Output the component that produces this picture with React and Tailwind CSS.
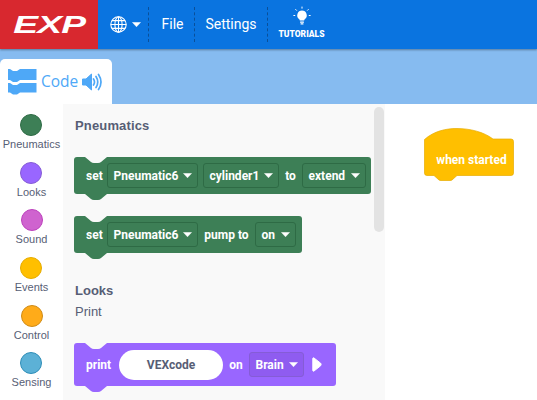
import React from 'react';

const categories = [
  { name: 'Pneumatics', bg: 'bg-[#3d7f56]', border: 'border-[#2e6b45]' },
  { name: 'Looks', bg: 'bg-[#9966ff]', border: 'border-[#855cd6]' },
  { name: 'Sound', bg: 'bg-[#cf63cf]', border: 'border-[#bd42bd]' },
  { name: 'Events', bg: 'bg-[#ffbf00]', border: 'border-[#e6ac00]' },
  { name: 'Control', bg: 'bg-[#ffab19]', border: 'border-[#cf8b17]' },
  { name: 'Sensing', bg: 'bg-[#5cb1d6]', border: 'border-[#2e8eb8]' },
];

const Caret = ({ className }) => (
  <svg width="9" height="5" viewBox="0 0 9 5" className={`shrink-0 ${className || ''}`}>
    <path d="M0.5 0.5 H8.5 L4.5 4.8 Z" fill="currentColor" stroke="currentColor" strokeWidth="0.5" strokeLinejoin="round" />
  </svg>
);

const Globe = () => (
  <svg width="17" height="17" viewBox="0 0 17 17" fill="none" stroke="white" strokeWidth="1.1">
    <circle cx="8.5" cy="8.5" r="7.7" />
    <ellipse cx="8.5" cy="8.5" rx="3.6" ry="7.7" />
    <path d="M8.5 0.8 V16.2 M0.8 8.5 H16.2 M1.9 4.6 H15.1 M1.9 12.4 H15.1" />
  </svg>
);

const Bulb = () => (
  <svg width="20" height="20" viewBox="0 0 20 20" fill="white">
    <path d="M10 4.5 a4.8 4.8 0 0 1 3 8.5 c-.6.5-.8 1-.8 1.6 H7.8 c0-.6-.2-1.1-.8-1.6 A4.8 4.8 0 0 1 10 4.5 Z" />
    <rect x="8" y="15.4" width="4" height="1.3" rx=".5" />
    <rect x="8.5" y="17.2" width="3" height="1.2" rx=".5" />
    <path d="M10 .6 V2.6 M3.4 3.2 L4.8 4.6 M16.6 3.2 L15.2 4.6 M1.4 9.5 H3.2 M16.8 9.5 H18.6" stroke="white" strokeWidth="1" />
  </svg>
);

const CodeIcon = () => (
  <svg width="29" height="26" viewBox="0 0 29 26" fill="#4ea8f7">
    <path d="M0 0 H2 L5 2 H9 L12 0 H28.5 V11 H12 L9 13 H5 L2 11 H0 Z" />
    <path d="M0 14 H2 L5 16 H9 L12 14 H28.5 V23.5 H12 L9 25.5 H5 L2 23.5 H0 Z" />
  </svg>
);

const Speaker = () => (
  <svg width="20" height="18" viewBox="0 0 20 18" fill="none">
    <path d="M0.5 6 H4 L9.5 1 V17 L4 12 H0.5 Z" fill="#4ea8f7" stroke="#4ea8f7" strokeLinejoin="round" />
    <path d="M11.5 6 Q13.5 9 11.5 12 M14 3.5 Q17.5 9 14 14.5 M16.5 1.5 Q21.5 9 16.5 16.5" stroke="#4ea8f7" strokeWidth="1.7" strokeLinecap="round" />
  </svg>
);

const Dropdown = ({ label, w, border, bg }) => (
  <div className={`flex h-[25px] items-center justify-between rounded-[3px] border pl-[5.5px] pr-[5px] ${w} ${border} ${bg}`}>
    <span>{label}</span>
    <Caret className="text-white" />
  </div>
);

// stack block: notch cut out of the top, bump under the bottom edge
const Block = ({ color, fill, h, w, children }) => (
  <div className={`relative flex items-center rounded-[3px] pl-3 text-[12px] font-bold text-white font-['Roboto',sans-serif] ${color} ${h} ${w}`}>
    <svg width="22" height="6" viewBox="0 0 22 6" className="absolute left-[11px] top-0">
      <path d="M0 0 H22 L16 5 Q15 6 13 6 H9 Q7 6 6 5 Z" fill="#f9f9f9" />
    </svg>
    <svg width="22" height="6" viewBox="0 0 22 6" className="absolute left-[11px] top-full">
      <path d="M0 0 H22 L16 5 Q15 6 13 6 H9 Q7 6 6 5 Z" fill={fill} />
    </svg>
    {children}
  </div>
);

const App = () => {
  return (
    <div className="flex h-[400px] w-[537px] flex-col overflow-hidden bg-white font-['Liberation_Sans',sans-serif]">
      {/* Menu bar */}
      <header className="relative z-10 flex h-[49px] shrink-0 items-stretch bg-[#0a74e0] text-white shadow-[0_1px_2px_rgba(0,0,0,0.35)] font-['Roboto',sans-serif]">
        <div className="flex w-[98px] items-center justify-center bg-[#d8282f]">
          <span className="inline-block origin-center scale-x-[1.55] text-[24px] font-black italic leading-none tracking-[-0.5px] font-['Liberation_Sans',sans-serif]">EXP</span>
        </div>
        <div className="flex w-[50px] items-center gap-[5px] pl-[12px]">
          <Globe />
          <Caret />
        </div>
        <div className="my-[7px] flex w-[46px] items-center justify-center border-l border-dashed border-[#0a4f99] pl-[2px] text-[14px]">File</div>
        <div className="my-[7px] flex w-[73px] items-center justify-center border-l border-dashed border-[#0a4f99] text-[14px]">Settings</div>
        <div className="my-[7px] flex w-[68px] flex-col items-center border-l border-dashed border-[#0a4f99]">
          <div className="-mt-[1px]"><Bulb /></div>
          <span className="mt-[4px] text-[8.5px] font-black leading-none">TUTORIALS</span>
        </div>
      </header>

      {/* Tab strip */}
      <div className="flex h-[55px] shrink-0 items-end bg-[#86bbf0]">
        <div className="flex h-[45px] w-[112px] items-center gap-[4px] rounded-t-[5px] bg-white pl-[8px] pt-[1px]">
          <CodeIcon />
          <span className="text-[15.5px] text-[#4ea8f7] font-['Open_Sans',sans-serif]">Code</span>
          <Speaker />
        </div>
      </div>

      <div className="flex min-h-0 flex-1">
        {/* Categories */}
        <div className="flex w-[63px] shrink-0 flex-col items-center pt-[10px]">
          {categories.map((c) => (
            <div key={c.name} className="flex h-[48px] flex-col items-center">
              <div className={`h-[22px] w-[22px] rounded-full border ${c.bg} ${c.border}`} />
              <span className="mt-[2px] text-[11px] leading-[13px] text-[#575e75]">{c.name}</span>
            </div>
          ))}
        </div>

        {/* Flyout */}
        <div className="relative w-[322px] shrink-0 overflow-hidden bg-[#f9f9f9] pl-[11px]">
          <div className="absolute right-[1px] top-[3px] h-[125px] w-[10px] rounded-full bg-[#e3e3e3]" />
          <div className="pl-[1px] pt-[14px] text-[13px] font-bold leading-[15px] tracking-[0.15px] text-[#575e75]">Pneumatics</div>
          <div className="mt-[24px]">
            <Block color="bg-[#3d7f56]" fill="#3d7f56" h="h-[37px]" w="w-[297px]">
              <span className="w-[21px]">set</span>
              <Dropdown label="Pneumatic6" w="w-[91px]" border="border-[#2e6b45]" bg="bg-[#3d7f56]" />
              <div className="w-[5px]" />
              <Dropdown label="cylinder1" w="w-[76px]" border="border-[#2e6b45]" bg="bg-[#3d7f56]" />
              <span className="w-[23px] text-center">to</span>
              <Dropdown label="extend" w="w-[64px]" border="border-[#2e6b45]" bg="bg-[#3d7f56]" />
            </Block>
          </div>
          <div className="mt-[22px]">
            <Block color="bg-[#3d7f56]" fill="#3d7f56" h="h-[37px]" w="w-[228px]">
              <span className="w-[21px]">set</span>
              <Dropdown label="Pneumatic6" w="w-[91px]" border="border-[#2e6b45]" bg="bg-[#3d7f56]" />
              <span className="w-[57px] text-center">pump to</span>
              <Dropdown label="on" w="w-[41px]" border="border-[#2e6b45]" bg="bg-[#3d7f56]" />
            </Block>
          </div>
          <div className="mt-[30px] pl-[1px] text-[13px] font-bold leading-[15px] text-[#575e75]">Looks</div>
          <div className="mt-[6px] pl-[1px] text-[13px] leading-[15px] text-[#575e75]">Print</div>
          <div className="mt-[24px]">
            <Block color="bg-[#9966ff]" fill="#9966ff" h="h-[43px]" w="w-[262px]">
              <span className="w-[33px]">print</span>
              <div className="flex h-[30px] w-[104px] items-center justify-center rounded-full bg-white text-[#575e75]">VEXcode</div>
              <span className="w-[26px] text-center">on</span>
              <Dropdown label="Brain" w="w-[55px]" border="border-[#855cd6]" bg="bg-[#8f5cf0]" />
              <svg width="10" height="15" viewBox="0 0 10 15" className="ml-[8px]">
                <path d="M0.8 1.5 Q0.8 0.5 2 1 L8.6 6.2 Q9.6 7.5 8.6 8.8 L2 14 Q0.8 14.5 0.8 13.5 Z" fill="white" stroke="white" />
              </svg>
            </Block>
          </div>
        </div>

        {/* Workspace */}
        <div className="min-w-0 flex-1 pl-[39px] pt-[24px]">
          <div className="relative flex h-[53px] w-[90px] items-center justify-center">
            <svg width="90" height="53" viewBox="0 0 90 53" className="absolute left-0 top-0">
              <path d="M0.5 11.5 C10 3 22 0.5 33 0.5 C46 0.5 60 4 69 11 H87 Q89.5 11 89.5 13.5 V45 Q89.5 47.5 87 47.5 H33 L28 52 Q27 52.5 26 52.5 H17 Q16 52.5 15 52 L10 47.5 H3 Q0.5 47.5 0.5 45 Z" fill="#ffbf00" stroke="#e6ac00" strokeWidth="0.7" />
            </svg>
            <span className="relative mt-[10px] pl-[5px] text-[12px] font-bold text-white font-['Roboto',sans-serif]">when started</span>
          </div>
        </div>
      </div>
    </div>
  );
};

export default App;
